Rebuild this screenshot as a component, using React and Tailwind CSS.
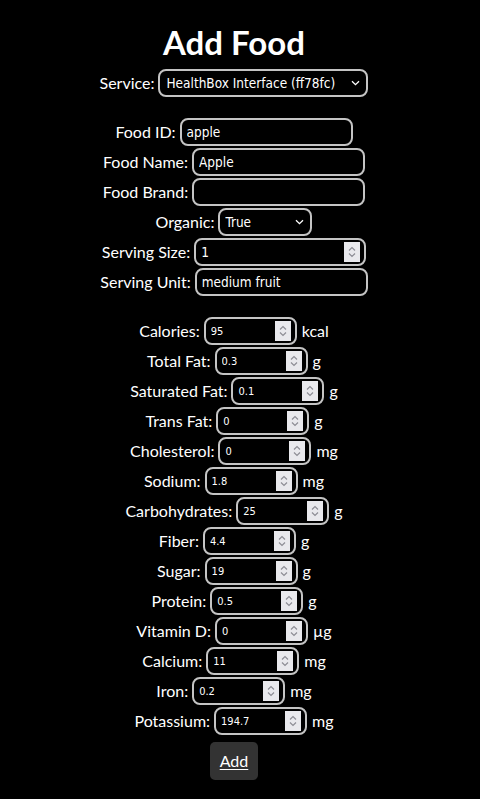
import { useState } from "react";

const nutrients = [
  { label: "Calories", value: "95", unit: "kcal" },
  { label: "Total Fat", value: "0.3", unit: "g" },
  { label: "Saturated Fat", value: "0.1", unit: "g" },
  { label: "Trans Fat", value: "0", unit: "g" },
  { label: "Cholesterol", value: "0", unit: "mg" },
  { label: "Sodium", value: "1.8", unit: "mg" },
  { label: "Carbohydrates", value: "25", unit: "g" },
  { label: "Fiber", value: "4.4", unit: "g" },
  { label: "Sugar", value: "19", unit: "g" },
  { label: "Protein", value: "0.5", unit: "g" },
  { label: "Vitamin D", value: "0", unit: "µg" },
  { label: "Calcium", value: "11", unit: "mg" },
  { label: "Iron", value: "0.2", unit: "mg" },
  { label: "Potassium", value: "194.7", unit: "mg" },
];

const box =
  "h-[28px] rounded-[8px] border-2 border-[#c4c4c4] bg-black text-white font-['DejaVu_Sans_Condensed','DejaVu_Sans',sans-serif] [font-stretch:condensed] outline-none";

const noSpin =
  "[appearance:textfield] [&::-webkit-inner-spin-button]:appearance-none [&::-webkit-outer-spin-button]:appearance-none";

function Row({ label, children }) {
  return (
    <div className="flex h-[30px] items-center justify-center gap-[4px]">
      <span>{label}:</span>
      {children}
    </div>
  );
}

// spinner drawn over the number field
function Spinner() {
  return (
    <div className="pointer-events-none absolute right-[6px] top-1/2 flex h-[20px] w-[16px] -translate-y-1/2 items-center justify-center bg-[#e9e9ed]">
      <svg width="10" height="16" viewBox="0 0 10 16" fill="none" stroke="#8d8d95" strokeWidth="1.2">
        <path d="M2 6.5 L5 3.5 L8 6.5" />
        <path d="M2 9.5 L5 12.5 L8 9.5" />
      </svg>
    </div>
  );
}

function NumberBox({ value, onChange, className }) {
  return (
    <div className="relative">
      <input type="number" className={`${box} ${noSpin} ${className}`} value={value} onChange={onChange} />
      <Spinner />
    </div>
  );
}

function Select({ className, value, onChange, children }) {
  return (
    <div className="relative">
      <select className={`${box} appearance-none ${className}`} value={value} onChange={onChange}>
        {children}
      </select>
      <svg
        className="pointer-events-none absolute right-[8px] top-1/2 -translate-y-1/2"
        width="9"
        height="6"
        viewBox="0 0 9 6"
        fill="none"
        stroke="#ffffff"
        strokeWidth="1.3"
      >
        <path d="M1 1.2 L4.5 4.7 L8 1.2" />
      </svg>
    </div>
  );
}

export default function App() {
  const [food, setFood] = useState({
    id: "apple",
    name: "Apple",
    brand: "",
    organic: "True",
    size: "1",
    unit: "medium fruit",
  });
  const [values, setValues] = useState(
    Object.fromEntries(nutrients.map((n) => [n.label, n.value]))
  );

  const set = (k) => (e) => setFood({ ...food, [k]: e.target.value });

  return (
    <div className="min-h-[799px] bg-black text-white font-['Lato',sans-serif] text-[16px]">
      <div className="flex w-[468px] flex-col items-center pt-[22px] pb-[19px]">
        <h1 className="text-[33px] font-bold leading-[40px]">Add Food</h1>

        {/* service */}
        <div className="mt-[6px] flex h-[30px] items-center justify-center gap-[4px]">
          <span>Service:</span>
          <Select className="w-[210px] pl-[6px] text-[13.5px]" value="hb" onChange={() => {}}>
            <option value="hb">HealthBox Interface (ff78fc)</option>
          </Select>
        </div>

        {/* food info */}
        <div className="mt-[19px] flex flex-col items-center">
          <Row label="Food ID">
            <input className={`${box} w-[173px] px-[5px] text-[13.5px]`} value={food.id} onChange={set("id")} />
          </Row>
          <Row label="Food Name">
            <input className={`${box} w-[173px] px-[5px] text-[13.5px]`} value={food.name} onChange={set("name")} />
          </Row>
          <Row label="Food Brand">
            <input className={`${box} w-[173px] px-[5px] text-[13.5px]`} value={food.brand} onChange={set("brand")} />
          </Row>
          <Row label="Organic">
            <Select className="w-[94px] pl-[5px] text-[13.5px]" value={food.organic} onChange={set("organic")}>
              <option>True</option>
              <option>False</option>
            </Select>
          </Row>
          <Row label="Serving Size">
            <NumberBox className="w-[172px] px-[5px] text-[13.5px]" value={food.size} onChange={set("size")} />
          </Row>
          <Row label="Serving Unit">
            <input className={`${box} w-[173px] px-[5px] text-[13.5px]`} value={food.unit} onChange={set("unit")} />
          </Row>
        </div>

        {/* nutrients */}
        <div className="mt-[19px] flex flex-col items-center">
          {nutrients.map((n) => (
            <div key={n.label} className="flex h-[30px] items-center justify-center gap-[4px]">
              <span>{n.label}:</span>
              <NumberBox
                className="w-[93px] px-[5px] text-[11px]"
                value={values[n.label]}
                onChange={(e) => setValues({ ...values, [n.label]: e.target.value })}
              />
              <span className="ml-[1px]">{n.unit}</span>
            </div>
          ))}
        </div>

        <button className="mt-[6px] h-[38px] w-[48px] rounded-[5px] bg-[#333333] underline underline-offset-2">
          Add
        </button>
      </div>
    </div>
  );
}
